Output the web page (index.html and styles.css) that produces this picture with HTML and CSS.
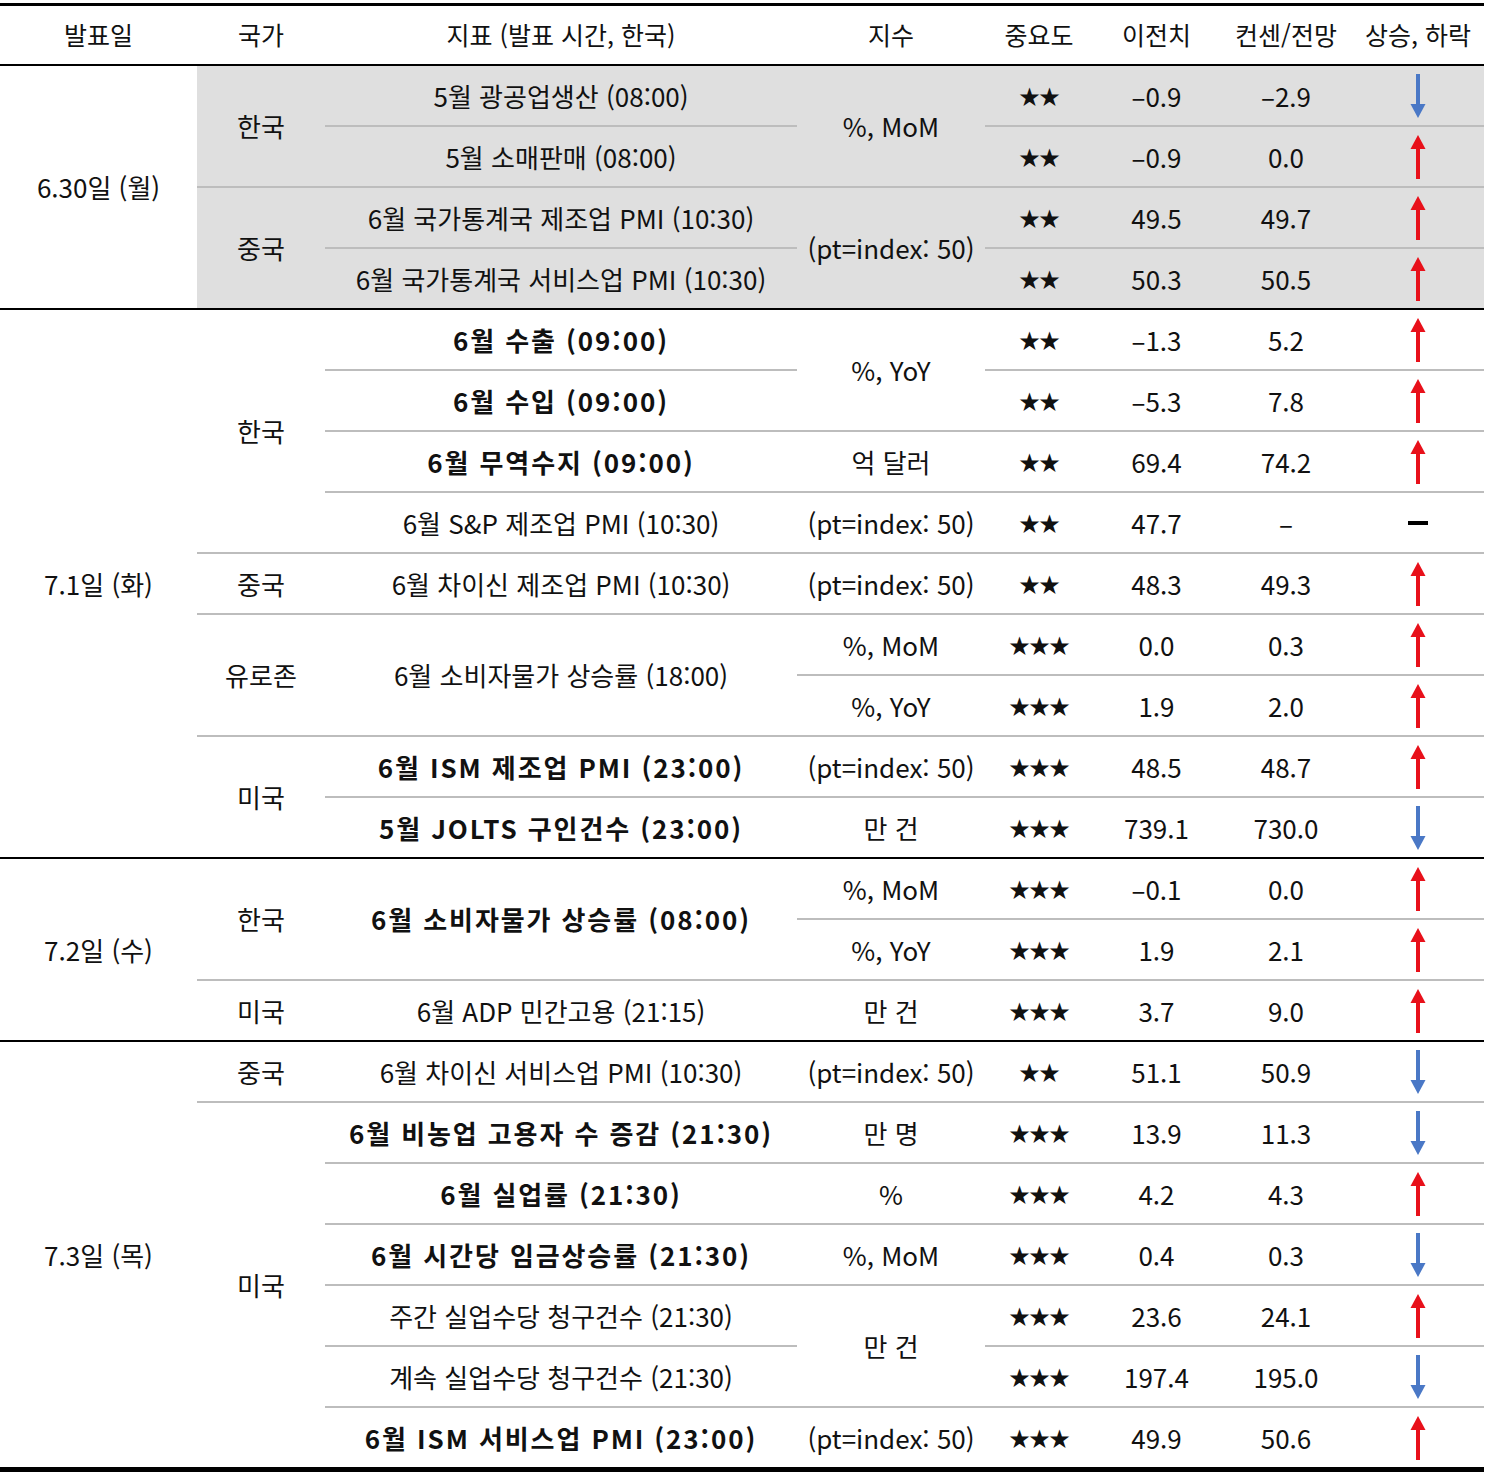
FILE: index.html
```html
<!DOCTYPE html>
<html lang="ko">
<head>
<meta charset="utf-8">
<title>경제지표 일정</title>
<link rel="stylesheet" href="styles.css">
</head>
<body>
<svg class="defs" width="0" height="0" aria-hidden="true">
  <defs>
    <symbol id="up" viewBox="0 0 20 44">
      <rect x="8" y="11" width="4" height="33" fill="#e8101a"/>
      <polygon points="10,0 2.5,14 17.5,14" fill="#e8101a"/>
    </symbol>
    <symbol id="down" viewBox="0 0 20 44">
      <rect x="8" y="0" width="4" height="33" fill="#4a78c6"/>
      <polygon points="10,44 2.5,30 17.5,30" fill="#4a78c6"/>
    </symbol>
  </defs>
</svg>
<table class="cal">
  <colgroup>
    <col class="c-date"><col class="c-cty"><col class="c-ind"><col class="c-unit">
    <col class="c-imp"><col class="c-prev"><col class="c-cons"><col class="c-dir">
  </colgroup>
  <thead>
    <tr>
      <th>발표일</th><th>국가</th><th>지표 (발표 시간, 한국)</th><th>지수</th>
      <th>중요도</th><th>이전치</th><th>컨센/전망</th><th>상승, 하락</th>
    </tr>
  </thead>
  <tbody class="grp shaded">
    <tr>
      <td rowspan="4" class="date">6.30일 (월)</td>
      <td rowspan="2">한국</td>
      <td>5월 광공업생산 (08:00)</td>
      <td rowspan="2">%, MoM</td>
      <td class="star">★★</td><td>–0.9</td><td>–2.9</td>
      <td><svg class="arr"><use href="#down"/></svg></td>
    </tr>
    <tr>
      <td>5월 소매판매 (08:00)</td>
      <td class="star">★★</td><td>–0.9</td><td>0.0</td>
      <td><svg class="arr"><use href="#up"/></svg></td>
    </tr>
    <tr>
      <td rowspan="2">중국</td>
      <td>6월 국가통계국 제조업 PMI (10:30)</td>
      <td rowspan="2">(pt=index: 50)</td>
      <td class="star">★★</td><td>49.5</td><td>49.7</td>
      <td><svg class="arr"><use href="#up"/></svg></td>
    </tr>
    <tr>
      <td>6월 국가통계국 서비스업 PMI (10:30)</td>
      <td class="star">★★</td><td>50.3</td><td>50.5</td>
      <td><svg class="arr"><use href="#up"/></svg></td>
    </tr>
  </tbody>
  <tbody class="grp">
    <tr>
      <td rowspan="9" class="date">7.1일 (화)</td>
      <td rowspan="4">한국</td>
      <td class="b">6월 수출 (09:00)</td>
      <td rowspan="2">%, YoY</td>
      <td class="star">★★</td><td>–1.3</td><td>5.2</td>
      <td><svg class="arr"><use href="#up"/></svg></td>
    </tr>
    <tr>
      <td class="b">6월 수입 (09:00)</td>
      <td class="star">★★</td><td>–5.3</td><td>7.8</td>
      <td><svg class="arr"><use href="#up"/></svg></td>
    </tr>
    <tr>
      <td class="b">6월 무역수지 (09:00)</td>
      <td>억 달러</td>
      <td class="star">★★</td><td>69.4</td><td>74.2</td>
      <td><svg class="arr"><use href="#up"/></svg></td>
    </tr>
    <tr>
      <td>6월 S&amp;P 제조업 PMI (10:30)</td>
      <td>(pt=index: 50)</td>
      <td class="star">★★</td><td>47.7</td><td>–</td>
      <td><span class="flat"></span></td>
    </tr>
    <tr>
      <td>중국</td>
      <td>6월 차이신 제조업 PMI (10:30)</td>
      <td>(pt=index: 50)</td>
      <td class="star">★★</td><td>48.3</td><td>49.3</td>
      <td><svg class="arr"><use href="#up"/></svg></td>
    </tr>
    <tr>
      <td rowspan="2">유로존</td>
      <td rowspan="2">6월 소비자물가 상승률 (18:00)</td>
      <td>%, MoM</td>
      <td class="star">★★★</td><td>0.0</td><td>0.3</td>
      <td><svg class="arr"><use href="#up"/></svg></td>
    </tr>
    <tr>
      <td>%, YoY</td>
      <td class="star">★★★</td><td>1.9</td><td>2.0</td>
      <td><svg class="arr"><use href="#up"/></svg></td>
    </tr>
    <tr>
      <td rowspan="2">미국</td>
      <td class="b">6월 ISM 제조업 PMI (23:00)</td>
      <td>(pt=index: 50)</td>
      <td class="star">★★★</td><td>48.5</td><td>48.7</td>
      <td><svg class="arr"><use href="#up"/></svg></td>
    </tr>
    <tr>
      <td class="b">5월 JOLTS 구인건수 (23:00)</td>
      <td>만 건</td>
      <td class="star">★★★</td><td>739.1</td><td>730.0</td>
      <td><svg class="arr"><use href="#down"/></svg></td>
    </tr>
  </tbody>
  <tbody class="grp">
    <tr>
      <td rowspan="3" class="date">7.2일 (수)</td>
      <td rowspan="2">한국</td>
      <td rowspan="2" class="b">6월 소비자물가 상승률 (08:00)</td>
      <td>%, MoM</td>
      <td class="star">★★★</td><td>–0.1</td><td>0.0</td>
      <td><svg class="arr"><use href="#up"/></svg></td>
    </tr>
    <tr>
      <td>%, YoY</td>
      <td class="star">★★★</td><td>1.9</td><td>2.1</td>
      <td><svg class="arr"><use href="#up"/></svg></td>
    </tr>
    <tr>
      <td>미국</td>
      <td>6월 ADP 민간고용 (21:15)</td>
      <td>만 건</td>
      <td class="star">★★★</td><td>3.7</td><td>9.0</td>
      <td><svg class="arr"><use href="#up"/></svg></td>
    </tr>
  </tbody>
  <tbody class="grp last">
    <tr>
      <td rowspan="7" class="date">7.3일 (목)</td>
      <td>중국</td>
      <td>6월 차이신 서비스업 PMI (10:30)</td>
      <td>(pt=index: 50)</td>
      <td class="star">★★</td><td>51.1</td><td>50.9</td>
      <td><svg class="arr"><use href="#down"/></svg></td>
    </tr>
    <tr>
      <td rowspan="6">미국</td>
      <td class="b">6월 비농업 고용자 수 증감 (21:30)</td>
      <td>만 명</td>
      <td class="star">★★★</td><td>13.9</td><td>11.3</td>
      <td><svg class="arr"><use href="#down"/></svg></td>
    </tr>
    <tr>
      <td class="b">6월 실업률 (21:30)</td>
      <td>%</td>
      <td class="star">★★★</td><td>4.2</td><td>4.3</td>
      <td><svg class="arr"><use href="#up"/></svg></td>
    </tr>
    <tr>
      <td class="b">6월 시간당 임금상승률 (21:30)</td>
      <td>%, MoM</td>
      <td class="star">★★★</td><td>0.4</td><td>0.3</td>
      <td><svg class="arr"><use href="#down"/></svg></td>
    </tr>
    <tr>
      <td>주간 실업수당 청구건수 (21:30)</td>
      <td rowspan="2">만 건</td>
      <td class="star">★★★</td><td>23.6</td><td>24.1</td>
      <td><svg class="arr"><use href="#up"/></svg></td>
    </tr>
    <tr>
      <td>계속 실업수당 청구건수 (21:30)</td>
      <td class="star">★★★</td><td>197.4</td><td>195.0</td>
      <td><svg class="arr"><use href="#down"/></svg></td>
    </tr>
    <tr>
      <td class="b">6월 ISM 서비스업 PMI (23:00)</td>
      <td>(pt=index: 50)</td>
      <td class="star">★★★</td><td>49.9</td><td>50.6</td>
      <td><svg class="arr"><use href="#up"/></svg></td>
    </tr>
  </tbody>
</table>
</body>
</html>
```
FILE: styles.css
```css
html, body {
  margin: 0;
  padding: 0;
  background: #ffffff;
}

body {
  padding-top: 3px;
  font-family: "Noto Sans CJK KR", "Noto Sans", "Liberation Sans", sans-serif;
  color: #111111;
}

.defs {
  position: absolute;
  width: 0;
  height: 0;
  overflow: hidden;
}

.cal {
  width: 1484px;
  table-layout: fixed;
  border-collapse: separate;
  border-spacing: 0;
  border-top: 3px solid #000000;
  border-bottom: 5px solid #000000;
  font-size: 26px;
  line-height: 1;
}

.c-date { width: 197px; }
.c-cty { width: 128px; }
.c-ind { width: 472px; }
.c-unit { width: 188px; }
.c-imp { width: 108px; }
.c-prev { width: 127px; }
.c-cons { width: 132px; }
.c-dir { width: 132px; }

.cal th {
  height: 56px;
  padding: 0 0 2px;
  font-weight: 400;
  font-size: 25px;
  text-align: center;
  vertical-align: middle;
}

.cal td {
  height: 59px;
  padding: 0;
  text-align: center;
  vertical-align: middle;
  border-top: 2px solid #bdbdbd;
  white-space: nowrap;
}

.grp > tr:first-child > td {
  border-top: 2px solid #000000;
}

.shaded td {
  background: #dfdfdf;
}

.shaded td.date {
  background: #ffffff;
}

.cal td.b {
  font-weight: 700;
  letter-spacing: 1.9px;
}

.cal td.star {
  font-size: 21px;
  letter-spacing: -1px;
}

.arr {
  display: block;
  margin: 0 auto;
  width: 20px;
  height: 44px;
}

.flat {
  display: block;
  margin: 0 auto;
  width: 20px;
  height: 4px;
  background: #000000;
}
```
